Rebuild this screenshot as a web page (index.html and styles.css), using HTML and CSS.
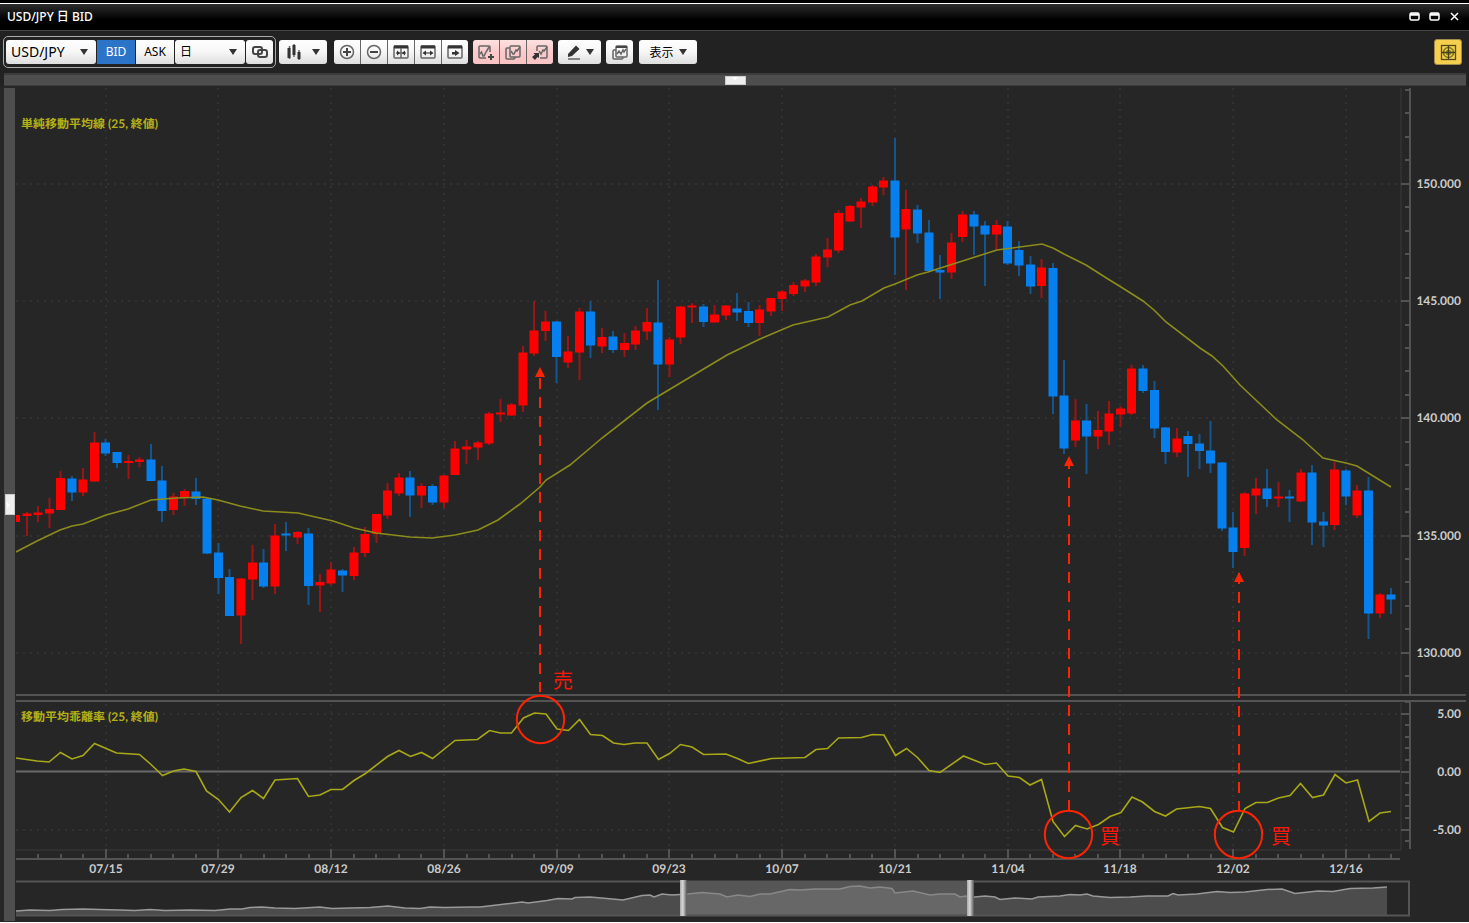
FILE: index.html
```html
<!DOCTYPE html>
<html lang="ja">
<head>
<meta charset="utf-8">
<title>USD/JPY 日 BID</title>
<link rel="stylesheet" href="styles.css">
</head>
<body>
<div class="window">
  <header class="titlebar">
    <h1 class="title">USD/JPY 日 BID</h1>
    <div class="window-controls">
      <button class="win-btn" type="button" aria-label="最小化"><svg width="11" height="10" viewBox="0 0 11 10"><rect x="1" y="1" width="9" height="7" rx="1.5" class="win-line"/><path d="M1 2.5H10" class="win-line thick"/></svg></button>
      <button class="win-btn" type="button" aria-label="最大化"><svg width="11" height="10" viewBox="0 0 11 10"><rect x="1" y="1" width="9" height="7" rx="1.5" class="win-line"/><path d="M1 2.5H10" class="win-line thick"/></svg></button>
      <button class="win-btn" type="button" aria-label="閉じる"><svg width="11" height="10" viewBox="0 0 11 10"><path d="M2 1L9 8M9 1L2 8" class="win-line"/></svg></button>
    </div>
  </header>

  <div class="toolbar">
    <div class="linked">
      <label class="drop drop-pair"><select aria-label="通貨ペア"><option>USD/JPY</option></select></label>
      <div class="sides">
        <button class="side active" type="button">BID</button>
        <button class="side" type="button">ASK</button>
      </div>
      <label class="drop drop-span"><select aria-label="足種"><option>日</option></select></label>
      <button class="btn btn-link" type="button" aria-label="リンク"><svg class="icon" width="18" height="16" viewBox="0 0 18 16"><rect x="2" y="3" width="9" height="7" rx="2" class="heavy"/><rect x="7" y="6" width="9" height="7" rx="2" class="heavy"/></svg></button>
    </div>

    <button class="btn btn-chart" type="button" aria-label="チャート種別"><svg class="icon" width="16" height="18" viewBox="0 0 16 18"><path d="M3.500 3V16M8 1V14M13 7V17" class="line"/><path d="M1.500 5H4.500V15H1.500ZM6.500 2H9.500V12H6.500ZM11.500 9H14.500V16H11.500Z" class="solid"/></svg><span class="caret"></span></button>

    <div class="group">
      <button class="btn" type="button" aria-label="拡大"><svg class="icon" width="18" height="18" viewBox="0 0 18 18"><circle cx="9" cy="9" r="6.500" class="line"/><path d="M9 5V13M5 9H13" class="heavy"/></svg></button>
      <button class="btn" type="button" aria-label="縮小"><svg class="icon" width="18" height="18" viewBox="0 0 18 18"><circle cx="9" cy="9" r="6.500" class="line"/><path d="M5 9H13" class="heavy"/></svg></button>
      <button class="btn" type="button" aria-label="間隔を広げる"><svg class="icon" width="18" height="18" viewBox="0 0 18 18"><rect x="2" y="3" width="14" height="12" rx="1" class="line"/><path d="M2 2.500H16V5.500H2Z" class="solid"/><path d="M9 5V15M4 10H14" class="line"/><path d="M5 7.500L8 10L5 12.500ZM13 7.500L10 10L13 12.500Z" class="solid"/></svg></button>
      <button class="btn" type="button" aria-label="全体表示"><svg class="icon" width="18" height="18" viewBox="0 0 18 18"><rect x="2" y="3" width="14" height="12" rx="1" class="line"/><path d="M2 2.500H16V5.500H2Z" class="solid"/><path d="M5 10H13" class="line"/><path d="M7 7.500L3.500 10L7 12.500ZM11 7.500L14.500 10L11 12.500Z" class="solid"/></svg></button>
      <button class="btn" type="button" aria-label="最新へ移動"><svg class="icon" width="18" height="18" viewBox="0 0 18 18"><rect x="2" y="3" width="14" height="12" rx="1" class="line"/><path d="M2 2.500H16V5.500H2ZM6 9H9V7L13.500 10L9 13V11.500H6Z" class="solid"/></svg></button>
    </div>

    <div class="group pink">
      <button class="btn" type="button" aria-label="テクニカル追加"><svg class="icon" width="18" height="18" viewBox="0 0 18 18"><path d="M13 9V4Q13 3 12 3H3Q2 3 2 4V14Q2 15 3 15H9" class="line"/><path d="M3 11L4.500 9L6 13H7L9 9L12 4" class="line"/><path d="M14 11V17M11 14H17" class="heavy"/></svg></button>
      <button class="btn" type="button" aria-label="テクニカル複製"><svg class="icon" width="18" height="18" viewBox="0 0 18 18"><path d="M5 5H3Q2 5 2 6V15Q2 16 3 16H10Q11 16 11 14" class="line"/><rect x="6" y="3" width="10" height="11" rx="1" class="line"/><path d="M7 8L9 11H10L12 7L13 8L16 4" class="line"/></svg></button>
      <button class="btn" type="button" aria-label="テクニカル適用"><svg class="icon" width="18" height="18" viewBox="0 0 18 18"><path d="M6 8V4Q6 3 7 3H15Q16 3 16 4V14Q16 15 15 15H9" class="line"/><path d="M8 8L10 11L12 7L13 8L16 4" class="line"/><path d="M1 14L4 11.500L2.500 10H8V15L6.500 14L4 17Z" class="solid"/></svg></button>
    </div>

    <button class="btn btn-draw" type="button" aria-label="描画"><svg class="icon" width="16" height="18" viewBox="0 0 16 18"><path d="M2 11L10 2.500L13.500 6L6 13L2 14Z" class="solid"/><path d="M2 16H14" class="line"/></svg><span class="caret"></span></button>
    <button class="btn btn-copy" type="button" aria-label="チャート複製"><svg class="icon" width="18" height="18" viewBox="0 0 18 18"><path d="M5 7H3Q2 7 2 8V15Q2 16 3 16H11Q12 16 12 14" class="line"/><rect x="5" y="3" width="11" height="11" rx="1" class="line"/><path d="M5 4H16" class="heavy"/><path d="M6 11L8 8L10 11L12 7L13 9L15 6" class="line"/></svg></button>
    <button class="btn btn-view" type="button">表示<span class="caret"></span></button>

    <button class="btn btn-target" type="button" aria-label="照準"><svg class="icon" width="17" height="17" viewBox="0 0 17 17"><rect x="1.500" y="1.500" width="14" height="14" class="target-box"/><circle cx="8.500" cy="8.500" r="5" class="target-ring"/><circle cx="8.500" cy="8.500" r="2" class="target-ring"/><path d="M8.500 2V15M2 8.500H15" class="target-cross"/></svg></button>
  </div>

  <div class="rail rail-top"><button class="grip grip-top" type="button" aria-label="上部パネルを開く"></button></div>

  <main class="stage">
    <div class="rail rail-left"><button class="grip grip-left" type="button" aria-label="左パネルを開く"></button></div>
    <div class="charts">
      <svg class="chart" viewBox="16 86 1453 793" role="img" aria-label="USD/JPY 日足と移動平均乖離率">
        <g id="grid"></g>
        <g id="axes"></g>
        <g id="candles"></g>
        <polyline class="average" points="16,552 37,541 60,530 72,526 83,524 106,515 128,509 151,500 177,498 203,497 218,500 240,506 263,511 298,513 333,521 354,528 376,533 410,537 432,538 455,535 478,530 498,520 520,504 540,487 546,480 570,465 602,438 647,403 687,379 727,355 760,339 793,325 828,317 850,305 862,301 884,288 895,284 917,275 928,272 997,250 1042,244 1053,248 1064,254 1086,265 1108,279 1121,287 1143,301 1154,310 1166,322 1200,348 1212,356 1223,366 1240,385 1277,420 1302,439 1323,458 1346,463 1357,466 1391,487"/>
        <polyline class="deviation" points="16,758 37,761 49,762 60.500,752.500 72,759 83,755.500 94.500,743.500 116.500,753 139.500,754.500 150.500,764 162.500,775.500 173.500,771 184,769 196,771.500 206.500,791 218.500,799.500 229.500,812 241,797.500 252.500,790.500 263.500,798.500 275,780 297.500,778.500 308.500,796.500 320,795 331,789.500 342.500,789.500 354,780.500 365.500,773.500 387.500,756.500 399,750.500 410.500,756.500 421.500,752.500 432.500,758.500 455,740.500 477.500,739.500 489.500,730.500 500.500,733 511.500,733 523.500,718 534.500,713 546,714 557,729 568.500,730.500 579.500,719.500 590.500,734.500 602.500,735.500 613.500,743 624,744.500 635,743 647,743 658.500,759.500 669.500,753.500 680.500,744.500 692,747 703.500,754.500 726,754 737.500,758.500 748.500,763.500 771.500,758.500 805,757.500 816,749.500 827.500,748.500 838.500,738 861.500,737.500 872.500,734.500 884,735 895.500,755.500 906.500,748.500 917.500,757.500 929,770.500 940,772.500 963.500,756 985,764.500 996.500,763 1008,776 1019.500,777.500 1030,785 1041.500,779.500 1053,821.500 1064.500,836.500 1075.500,825.500 1087,829 1098.500,824.500 1110,816.500 1121,812.500 1132,797 1142.500,802 1154.500,811.500 1165.500,816 1176.500,809 1199.500,806.500 1210.500,808.500 1222.500,827.500 1233.500,832 1245,808.500 1256,802.500 1267.500,802.500 1278.500,798 1290,795.500 1300.500,783.500 1312.500,797.500 1323.500,795 1335,774.500 1346,783 1357.500,780 1369,821.500 1380,813 1391,811.500"/>
        <text class="indicator" x="21" y="128">単純移動平均線 (25, 終値)</text>
        <text class="indicator" x="21" y="721">移動平均乖離率 (25, 終値)</text>
        <g class="signals">
          <path d="M540 378V692M1069 458V810M1239 573V810" class="signal-line"/>
          <path d="M540 367L545 377H535ZM1069 456L1074 466H1064ZM1239 572L1244 582H1234Z" class="signal-head"/>
          <circle cx="540.500" cy="719.500" r="23.700"/>
          <circle cx="1068.500" cy="834.500" r="23.700"/>
          <circle cx="1238.500" cy="834.500" r="23.700"/>
          <text x="553" y="688">売</text>
          <text x="1100" y="844">買</text>
          <text x="1271" y="844">買</text>
        </g>
      </svg>
      <svg class="navigator" viewBox="16 879 1453 43" role="img" aria-label="表示期間">
        <defs>
          <linearGradient id="handle"><stop offset="0" stop-color="#a8a8a8"/><stop offset=".4" stop-color="#d8d8d8"/><stop offset="1" stop-color="#555"/></linearGradient>
          <clipPath id="selected"><rect x="683" y="881" width="287" height="35"/></clipPath>
        </defs>
        <path id="nav-area" class="nav-area"/>
        <path id="nav-line" class="nav-line"/>
        <g clip-path="url(#selected)">
          <rect x="683" y="881" width="287" height="35" class="nav-window"/>
          <path id="sel-area" class="sel-area"/>
          <path id="sel-line" class="sel-line"/>
        </g>
        <path d="M16 881.500H1409V915.500H16" class="nav-frame"/>
        <rect x="680" y="880" width="7" height="36" fill="url(#handle)"/>
        <rect x="967" y="880" width="7" height="36" fill="url(#handle)"/>
      </svg>
    </div>
  </main>
</div>
<script src="chart.js"></script>
</body>
</html>
```
FILE: styles.css
```css
* { box-sizing: border-box; }

body {
  margin: 0;
  background: #fff;
  color: #fff;
  font-family: "Noto Sans", "Noto Sans CJK JP", sans-serif;
  font-size: 12px;
}

button, select {
  margin: 0;
  padding: 0;
  border: 0;
  font: inherit;
  color: inherit;
}

svg { display: block; }

.window {
  background: #222;
  border-top: 3px solid #000;
}

/* title bar */
.titlebar {
  display: flex;
  align-items: center;
  justify-content: space-between;
  height: 28px;
  padding: 0 9px 0 7px;
  border-top: 1px solid #fff;
  border-bottom: 1px solid #444;
  background: linear-gradient(#2c2c2c, #000 60%);
}
.title {
  margin: 0;
  font-size: 12px;
  font-weight: 500;
  line-height: 16px;
}
.window-controls { display: flex; gap: 9px; }
.win-btn { width: 11px; height: 10px; background: none; }
.win-line { fill: none; stroke: #fff; stroke-width: 1.5; }
.win-line.thick { stroke-width: 2.5; }

/* toolbar */
.toolbar {
  display: flex;
  align-items: center;
  height: 42px;
  padding: 0 7px 0 3px;
  background: #222;
  color: #000;
}
.linked {
  display: flex;
  gap: 1px;
  padding: 3px 2px;
  margin-right: 3px;
  border: 1px solid #aaa;
  border-radius: 5px;
}
.btn, .side, .drop select {
  height: 24px;
  background: linear-gradient(#fff, #f6f6f6 50%, #dedede);
  border-radius: 3px;
}
.btn {
  display: flex;
  align-items: center;
  justify-content: center;
  width: 26px;
}
.drop { position: relative; display: block; }
.drop::after, .caret {
  content: "";
  border: 4px solid transparent;
  border-top: 6px solid #333;
  border-bottom: 0;
}
.drop::after {
  position: absolute;
  right: 8px;
  top: 9px;
  pointer-events: none;
}
.drop select { appearance: none; width: 100%; padding: 0 5px 1px; }
.drop-pair { width: 90px; }
.drop-pair select { font-size: 14px; }
.drop-span { width: 70px; }
.sides { display: flex; gap: 1px; }
.side { width: 38px; border-radius: 0; padding-bottom: 1px; }
.side.active { background: #2b74c8; color: #fff; }

.btn-link { width: 27px; }
.btn-chart { width: 48px; gap: 10px; margin-right: 7px; }
.group { display: flex; gap: 1px; margin-right: 5px; background: #666; border-radius: 3px; }
.group .btn { border-radius: 0; }
.group .btn:first-child { border-radius: 3px 0 0 3px; }
.group .btn:last-child { border-radius: 0 3px 3px 0; }
.pink .btn { background: linear-gradient(#fde0e0, #fbcaca 50%, #f8c4c4); }
.btn-draw { width: 43px; gap: 4px; margin-right: 5px; }
.btn-copy { width: 27px; margin-right: 6px; }
.btn-view { width: 58px; gap: 5px; padding-bottom: 1px; }
.btn-target {
  width: 28px;
  height: 26px;
  margin-left: auto;
  border: 1px solid #a08a4a;
  background: #f6cf4e;
}
.icon .line { fill: none; stroke: #666; stroke-width: 1.5; }
.icon .heavy { fill: none; stroke: #444; stroke-width: 2; }
.icon .solid { fill: #333; }
.target-box { fill: none; stroke: #554a18; stroke-width: 1.3; }
.target-ring { fill: none; stroke: #817a18; stroke-width: 1.6; }
.target-cross { stroke: #454020; stroke-width: 1.3; }

/* panel rails */
.rail {
  display: flex;
  align-items: center;
  justify-content: center;
  background: #4e4e4e;
}
.rail-top {
  height: 13px;
  margin: 0 3px 0 4px;
  border: solid #3c3c3c;
  border-width: 2px 0 1px;
}
.rail-left { width: 11px; margin: 2px 1px 1px 4px; }
.grip { background: #eee; border: 1px solid #ccc; display: flex; align-items: center; justify-content: center; }
.grip::after { content: ""; border: 3px solid transparent; }
.grip-top { width: 21px; height: 9px; }
.grip-top::after { border-top-color: #fff; }
.grip-left { width: 10px; height: 21px; }
.grip-left::after { border-left-color: #fff; }

/* charts */
.stage { display: flex; background: #262626; }
.charts { flex: 1; min-width: 0; }
.chart, .navigator { width: 100%; height: auto; }

.grid-dots { fill: none; stroke: #323232; stroke-width: 2; stroke-dasharray: 2 5; }
.edge { fill: none; stroke: #303030; stroke-width: 2; }
.axis { fill: none; stroke: #535353; stroke-width: 2; }
.zero { stroke: #696969; stroke-width: 2; }
.axis-label { fill: #ccc; font: bold 12px Lato, sans-serif; text-rendering: geometricPrecision; }
.axis-label.price { text-anchor: end; }
.axis-label.date { text-anchor: middle; }
.up { fill: #fe0000; }
.down { fill: #0580ee; }
.wick-up { fill: none; stroke: #9c1414; stroke-width: 2; }
.wick-down { fill: none; stroke: #13568f; stroke-width: 2; }
.average { fill: none; stroke: #8c8c1c; stroke-width: 1.6; }
.deviation { fill: none; stroke: #a8a818; stroke-width: 1.6; }
.indicator { fill: #b4b018; font: bold 12px Lato, "Noto Sans CJK JP", sans-serif; text-rendering: geometricPrecision; }

.signals circle, .signal-line { fill: none; stroke: #fb2504; stroke-width: 2; }
.signal-line { stroke-dasharray: 11 8; }
.signal-head { fill: #fb2504; }
.signals text { fill: #fb1808; font: 20px "Noto Sans CJK JP", sans-serif; }

.nav-frame { fill: none; stroke: #555; stroke-width: 2; }
.nav-area { fill: #4c4c4c; }
.nav-line { fill: none; stroke: #999; stroke-width: 1.5; }
.nav-window { fill: #565656; }
.sel-area { fill: #676767; }
.sel-line { fill: none; stroke: #888; stroke-width: 1.5; }
```
FILE: chart.js
```js
// One row per trading day: direction, high, body top, body bottom, low (chart units).
const days = `
u 515 515 522 522|u 512 513.5 516 536|u 506 512.5 515 522|u 498 509 513.5 528|u 471 478 510 510
d 476 478.5 492.5 501|u 468 479.5 492.5 496|u 432 442.5 481.5 482|d 439 442.5 453.5 456|d 452 452 463 468
u 455 461 463 479|u 457 459.5 462 467|d 444 459.5 481 481|d 466 480.5 511 522|u 493 496.5 510 515
u 489 491 497.5 506|d 478 491.5 499 505|d 498 498.5 553.5 554|d 543 552.5 578 594|d 569 577 616 616
u 578 578.5 615.5 644|u 545 562.5 579.5 600|d 549 562.5 586.5 588|u 524 535.5 586.5 594|d 522 533.5 535.5 551
u 531 532 537.5 544|d 528 533.5 586 605|u 574 582 585.5 612|u 562 569.5 583.5 585|d 569 570.5 575.5 592
u 547 552.5 576 580|u 527 534 553 557|u 514 514 534 543|u 483 490.5 515.5 519|u 473 477.5 493.5 496
d 471 477.5 495.5 517|u 483 486 495.5 508|d 484 486 502.5 505|u 475 475.5 502.5 508|u 441 448.5 475 475
u 440 446.5 449.5 464|u 441 442.5 447.5 460|u 412 413.5 443.5 445|u 399 412.5 414.5 422|u 403 404.5 415.5 416
u 346 352.5 405.5 412|u 301 330.5 353.5 356|u 311 321.5 331 341|d 321 321.5 357 383|u 336 351.5 362.5 368
u 308 311.5 352.5 380|d 301 311.5 345.5 358|u 328 337 346.5 353|d 331 336.5 350 353|u 333 343 350 357
u 326 330.5 344.5 350|u 308 322 331.5 340|d 280 322.5 364.5 410|u 337 339.5 364.5 377|u 306 306.5 337.5 344
u 303 305.5 307.5 323|d 304 306.5 322 327|u 305 314.5 322.5 323|u 305 305.5 315.5 320|d 293 308.5 312.5 321
d 302 311 323 327|u 305 309.5 323 336|u 298 298 311.5 316|u 290 291.5 299 311|u 282 285 294 296
u 279 280.5 286.5 292|u 254 256.5 282.5 286|u 238 249.5 257.5 267|u 210 213 250.5 253|u 205 206 221.5 222
u 198 201.5 207.5 228|u 185 186.5 202.5 206|u 177 180.5 187.5 195|d 138 180.5 237.5 275|u 190 209 229.5 290
d 205 209.5 233.5 243|d 220 232.5 271 272|d 255 270 272.5 299|u 233 242.5 272.5 279|u 211 214.5 237 242
d 211 214.5 226.5 255|d 221 225.5 234.5 286|u 220 225 234.5 250|d 221 226.5 263.5 265|d 241 250 265.5 276
d 256 264.5 286.5 294|u 259 267.5 286 298|d 263 268 396.5 414|d 360 395.5 448.5 454|u 399 420.5 440.5 447
d 404 420.5 436.5 474|u 411 430 436.5 449|u 401 413.5 431.5 445|u 406 408.5 414.5 427|u 365 368.5 413.5 415
d 365 368.5 391 393|d 381 390 428.5 438|d 427 427.5 452 464|u 428 438.5 452.5 457|d 431 436 444 477
d 434 443.5 451 469|d 421 450.5 463.5 473|d 462 462.5 528.5 531|d 512 527.5 552 568|u 492 493.5 548 556
u 478 488.5 495.5 514|d 469 488.5 499 507|u 482 496.5 498.5 507|d 490 496.5 498.5 522|u 469 472.5 501.5 502
d 465 472.5 522.5 545|d 512 521.5 525.5 547|u 462 469.5 525 530|d 469 470.5 496.5 505|u 485 490.5 515.5 518
d 477 490.5 613.5 639|u 593 594.5 613.5 618|d 588 594.5 599.5 614`.trim().split(/[|\n]/);

const START = 15.5;
const STEP = 11.275;
const dayX = i => START + STEP * i;
const NS = "http://www.w3.org/2000/svg";

function add(parent, tag, attrs, text) {
  const el = document.createElementNS(NS, tag);
  for (const key in attrs) el.setAttribute(key, attrs[key]);
  if (text) el.textContent = text;
  parent.appendChild(el);
}

const grid = document.getElementById("grid");
const axes = document.getElementById("axes");
const candles = document.getElementById("candles");

// Dates: a labelled line every ten trading days, a tick every two.
const dates = ["07/15", "07/29", "08/12", "08/26", "09/09", "09/23", "10/07", "10/21", "11/04", "11/18", "12/02", "12/16"];
let columns = "";
let ticks = "";
dates.forEach((date, n) => {
  const x = Math.round(dayX(8 + n * 10));
  columns += `M${x} 88V692M${x} 704V848`;
  ticks += `M${x} 849V859`;
  add(axes, "text", { class: "axis-label date", x, y: 873 }, date);
});
for (let i = 2; i <= 122; i += 2) ticks += `M${Math.round(dayX(i))} 854V859`;

// Price and deviation levels.
const levels = [["150.000", 184], ["145.000", 301], ["140.000", 418], ["135.000", 536], ["130.000", 653], ["5.00", 714], ["0.00", 772], ["-5.00", 830]];
let rows = "";
levels.forEach(([label, y]) => {
  if (label !== "0.00") rows += `M16 ${y}H1400`;
  ticks += `M1401 ${y}H1410`;
  add(axes, "text", { class: "axis-label price", x: 1461, y: y + 4 }, label);
});
for (let n = 0; n < 26; n++) ticks += `M1405 ${Math.round(90 + n * 23.45)}H1410`;
for (let n = 0; n < 13; n++) ticks += `M1405 ${Math.round(702 + n * 11.6)}H1410`;

add(grid, "path", { class: "edge", d: "M1401 88V693M1401 703V850H16" });
add(grid, "path", { class: "grid-dots", d: columns + rows });
add(axes, "path", { class: "zero", d: "M16 771.5H1400" });
add(axes, "path", { class: "axis", d: ticks + "M1410 88V694M1410 702V849M16 695H1466M16 701H1466M16 859H1400" });

const shapes = { u: ["", ""], d: ["", ""] };
days.forEach((row, i) => {
  const [dir, high, top, bottom, low] = row.split(" ");
  const x = Math.round(dayX(i) * 2) / 2;
  const left = Math.max(16, x - 4.5);
  if (i > 0) shapes[dir][0] += `M${x} ${high}V${low}`;
  shapes[dir][1] += `M${left} ${top}H${x + 4.5}V${bottom}H${left}Z`;
});
add(candles, "path", { class: "wick-up", d: shapes.u[0] });
add(candles, "path", { class: "wick-down", d: shapes.d[0] });
add(candles, "path", { class: "up", d: shapes.u[1] });
add(candles, "path", { class: "down", d: shapes.d[1] });

// Long-range history under the chart.
const history = "16,911 30,910 50,910.5 62,909.5 83,909 100,909.5 120,910 135,910.5 150,909.5 165,910.5 190,910 215,910.5 230,909 242,909 250,907.5 262,907 275,908 295,908.5 320,907 332,908.5 350,908 370,907.5 388,906 405,908 420,908.5 430,907 445,907.5 470,907 480,907 497,905 505,904 522,902 528,903 547,900.5 558,898.5 572,899 575,897.5 590,897 607,898.5 623,900 642,895.5 650,895 654,897 662,894 672,895 680,894.5 688,894 702,892.5 720,894 727,897 738,895 750,896.5 760,894 770,894 790,889.5 800,890 815,889 840,889 850,886.5 860,886 870,888 880,887 892,888.5 895,893 904,892 913,891 930,895 940,894 955,894 960,897 966,896 975,897 985,896 995,897 1000,899.5 1015,898 1032,899 1038,897 1060,896 1070,894.5 1080,895 1087,894 1093,896 1110,897.5 1130,897 1147,896 1168,896 1173,893.5 1178,895 1197,894 1217,891.5 1230,892.5 1245,892 1267,889.5 1282,889 1295,893.5 1318,891 1333,891.5 1350,888.5 1373,888 1387,887";
const line = "M" + history.replace(/ /g, "L");
for (const id of ["nav-line", "sel-line"]) document.getElementById(id).setAttribute("d", line);
for (const id of ["nav-area", "sel-area"]) document.getElementById(id).setAttribute("d", line + "V915H16Z");
```
